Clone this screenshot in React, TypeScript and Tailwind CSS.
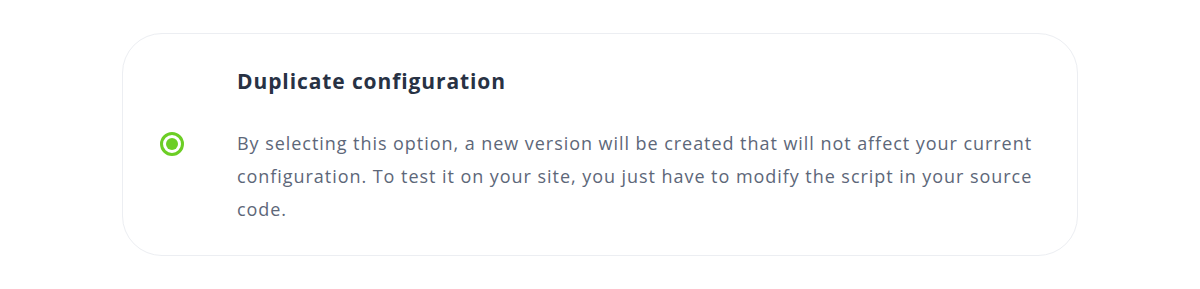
import React from 'react';

const RadioDot: React.FC<{ checked: boolean }> = ({ checked }) => (
  <span className="flex h-[24px] w-[24px] items-center justify-center rounded-full border-[3px] border-[#6cce25] bg-white">
    {checked && <span className="h-[12px] w-[12px] rounded-full bg-[#6cce25]" />}
  </span>
);

export default function App() {
  return (
    <div
      className="flex min-h-[289px] justify-center bg-white py-[33px]"
      style={{ fontFamily: '"Open Sans", "Noto Sans", sans-serif' }}
    >
      <div className="w-[956px] rounded-[40px] border border-[#eceef2] bg-white pb-[29px] pl-[37px] pr-[24px] pt-[33px]">
        <div className="grid grid-cols-[77px_1fr]">
          <div />
          <h2 className="text-[21px] font-bold leading-[28px] tracking-[0.9px] text-[#283244]">Duplicate configuration</h2>
          <div className="mt-[32px] flex h-[33px] items-center">
            <RadioDot checked />
          </div>
          <p className="mt-[32px] text-[18px] leading-[33px] tracking-[0.95px] text-[#5d6779]">
            By selecting this option, a new version will be created that will not affect your current
            configuration. To test it on your site, you just have to modify the script in your source
            code.
          </p>
        </div>
      </div>
    </div>
  );
}
